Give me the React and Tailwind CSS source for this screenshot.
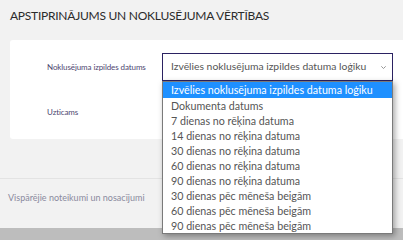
import React from "react";

const options = [
  "Izvēlies noklusējuma izpildes datuma loģiku",
  "Dokumenta datums",
  "7 dienas no rēķina datuma",
  "14 dienas no rēķina datuma",
  "30 dienas no rēķina datuma",
  "60 dienas no rēķina datuma",
  "90 dienas no rēķina datuma",
  "30 dienas pēc mēneša beigām",
  "60 dienas pēc mēneša beigām",
  "90 dienas pēc mēneša beigām",
];

export default function App() {
  return (
    <div
      className="relative w-[403px] h-[240px] overflow-hidden bg-[#f2f2f2] flex flex-col"
      style={{ fontFamily: "Lato, 'Open Sans', sans-serif" }}
    >
      <h1 className="pl-[10px] pt-[8px] h-[40px] shrink-0 text-[12px] leading-[16px] tracking-[-0.25px] text-[#2b2b2b] font-normal whitespace-nowrap">
        APSTIPRINĀJUMS UN NOKLUSĒJUMA VĒRTĪBAS
      </h1>
      <div className="ml-[10px] w-[420px] h-[99px] shrink-0 bg-white rounded-[3px] flex flex-col pt-[13px]">
        <div className="flex items-center h-[28px]">
          <div className="w-[152px] shrink-0 pl-[37px] text-[8px] tracking-[-0.1px] text-[#4d4670] whitespace-nowrap">
            Noklusējuma izpildes datums
          </div>
          <div className="relative w-[231px] shrink-0 h-[28px] border border-[#2b2262] flex items-center pl-[8px] text-[10.35px] text-[#555] whitespace-nowrap">
            <span>Izvēlies noklusējuma izpildes datuma loģiku</span>
            <svg className="absolute right-[6px] top-[12px]" width="5" height="3" viewBox="0 0 5 3">
              <path d="M0.3 0.3 L2.5 2.5 L4.7 0.3" fill="none" stroke="#8a8a8a" strokeWidth="0.9" />
            </svg>
          </div>
        </div>
        <div className="flex items-center h-[16px] mt-[23px]">
          <div className="pl-[37px] text-[8px] tracking-[-0.1px] text-[#4d4670]">Uzticams</div>
        </div>
      </div>
      <div className="mt-[39px] shrink-0 border-t border-[#e3e3e3] h-[50px] pt-[13px] pl-[8px] text-[9px] leading-[12px] text-[#8a8a9e] whitespace-nowrap">
        Vispārējie noteikumi un nosacījumi
      </div>
      <div className="flex-1 bg-[#bdbdbd]" />
      <ul className="absolute left-[162px] top-[81px] w-[231px] border border-[#7a7a7a] bg-white shadow-[2px_2px_6px_rgba(0,0,0,0.35)] text-[10.7px] text-[#555]">
        {options.map((o, i) => (
          <li
            key={i}
            className={
              "pl-[8px] whitespace-nowrap " +
              (i === 0 ? "bg-[#1e90ff] text-white h-[16px] leading-[16px]" : "h-[15px] leading-[15px]")
            }
          >
            {o}
          </li>
        ))}
      </ul>
    </div>
  );
}
